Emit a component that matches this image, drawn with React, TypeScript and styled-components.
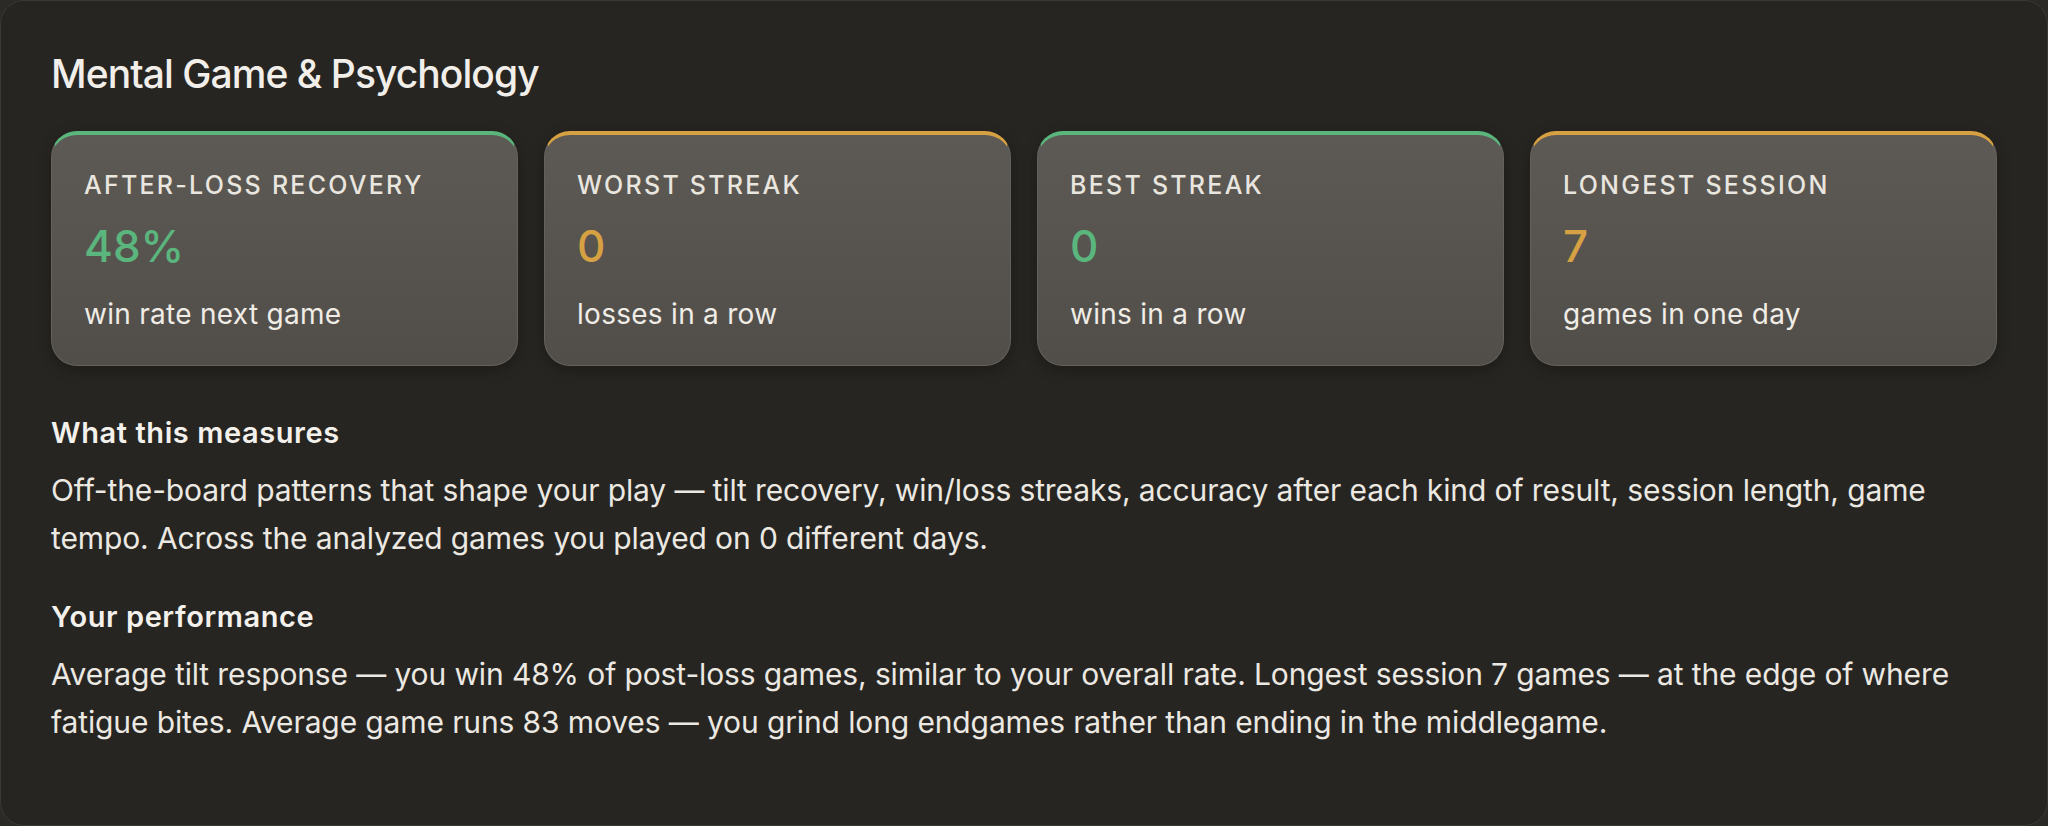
import React from 'react';
import styled, { createGlobalStyle } from 'styled-components';

const GlobalStyle = createGlobalStyle`
    html, body {
        margin: 0;
        padding: 0;
        background: #2b2a27;
    }
    body {
        font-family: Inter, "Noto Sans", sans-serif;
        color: #efebe5;
    }
    * {
        box-sizing: border-box;
    }
`;

const Panel = styled.section`
    min-height: 826px;
    padding: 50px 50px 40px;
    background: #262521;
    border: 1px solid #3a3934;
    border-radius: 24px;
`;

const Title = styled.h2`
    margin: 0;
    font-size: 39px;
    line-height: 1.2;
    font-weight: 550;
    letter-spacing: -0.024em;
    color: #f2efea;
`;

const CardGrid = styled.div`
    display: grid;
    grid-template-columns: repeat(4, 1fr);
    gap: 26px;
    margin-top: 33px;
`;

const Card = styled.div<{ $accent: string }>`
    padding: 34px 32px 31px;
    border: 1px solid #64605b;
    border-top: 4px solid ${(p) => p.$accent};
    border-radius: 26px;
    background: linear-gradient(180deg, #5d5a55 0%, #514e4a 100%);
    box-shadow: 0 4px 14px rgba(0, 0, 0, 0.28);
`;

const CardLabel = styled.div`
    font-size: 25px;
    line-height: 1.3;
    font-weight: 500;
    letter-spacing: 0.09em;
    text-transform: uppercase;
    color: #e9e5df;
`;

const CardValue = styled.div<{ $accent: string }>`
    margin-top: 19px;
    font-size: 44px;
    line-height: 1.2;
    font-weight: 500;
    color: ${(p) => p.$accent};
`;

const CardSub = styled.div`
    margin-top: 22px;
    font-size: 28px;
    line-height: 1.4;
    letter-spacing: 0.01em;
    color: #f0ece6;
`;

const SectionHeading = styled.h3<{ $first?: boolean }>`
    margin: ${(p) => (p.$first ? '48px' : '36px')} 0 14px;
    font-size: 29px;
    line-height: 1.3;
    font-weight: 600;
    letter-spacing: 0.02em;
    color: #f4f1ec;
`;

const Paragraph = styled.p`
    margin: 0;
    font-size: 30px;
    line-height: 48px;
    letter-spacing: -0.004em;
    color: #ece8e2;
`;

const GREEN = '#5ab67d';
const AMBER = '#d6a142';

type Stat = {
    label: string;
    value: string;
    sub: string;
    accent: string;
};

const stats: Stat[] = [
    { label: 'After-loss recovery', value: '48%', sub: 'win rate next game', accent: GREEN },
    { label: 'Worst streak', value: '0', sub: 'losses in a row', accent: AMBER },
    { label: 'Best streak', value: '0', sub: 'wins in a row', accent: GREEN },
    { label: 'Longest session', value: '7', sub: 'games in one day', accent: AMBER },
];

const App = () => {
    return (
        <>
            <GlobalStyle />
            <Panel>
                <Title>Mental Game &amp; Psychology</Title>
                <CardGrid>
                    {stats.map((s) => (
                        <Card key={s.label} $accent={s.accent}>
                            <CardLabel>{s.label}</CardLabel>
                            <CardValue $accent={s.accent}>{s.value}</CardValue>
                            <CardSub>{s.sub}</CardSub>
                        </Card>
                    ))}
                </CardGrid>
                <SectionHeading $first>What this measures</SectionHeading>
                <Paragraph>
                    Off-the-board patterns that shape your play — tilt recovery, win/loss streaks, accuracy
                    after each kind of result, session length, game tempo. Across the analyzed games you
                    played on 0 different days.
                </Paragraph>
                <SectionHeading>Your performance</SectionHeading>
                <Paragraph>
                    Average tilt response — you win 48% of post-loss games, similar to your overall rate.
                    Longest session 7 games — at the edge of where fatigue bites. Average game runs 83 moves
                    — you grind long endgames rather than ending in the middlegame.
                </Paragraph>
            </Panel>
        </>
    );
};

export default App;
